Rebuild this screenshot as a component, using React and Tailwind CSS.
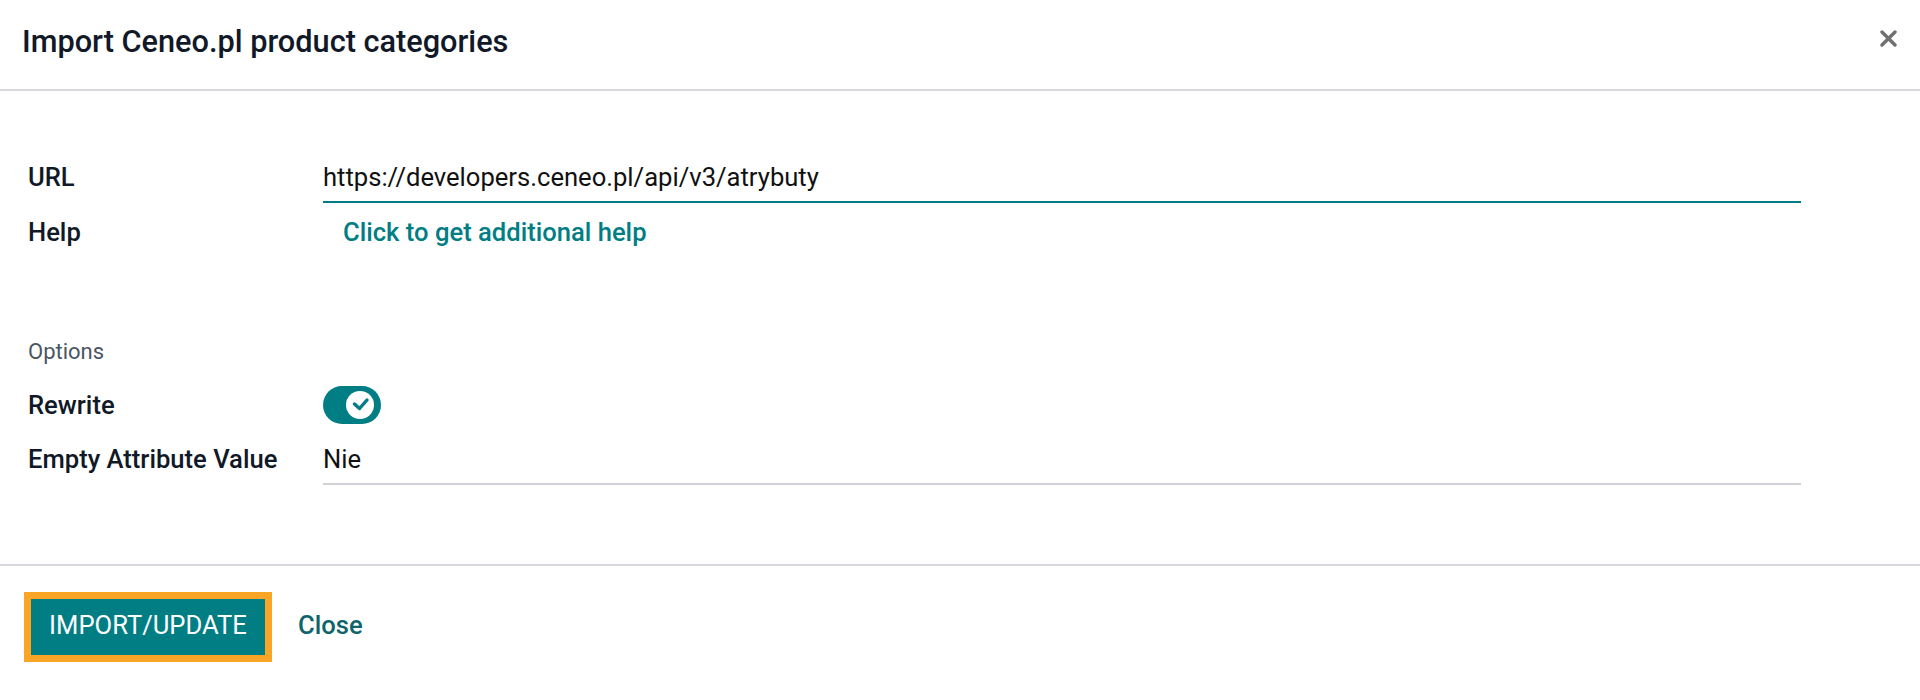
const fieldLabel = "w-[295px] shrink-0 pt-[6px] text-[25.6px] font-medium leading-[30px] text-[#111827]";

const Toggle = ({ checked = true }) => (
  <button
    type="button"
    aria-pressed={checked}
    className="flex h-[38px] w-[58px] items-center justify-end rounded-full bg-[#017e84] pr-[7px]"
  >
    <span className="flex h-[28px] w-[28px] items-center justify-center rounded-full bg-white">
      <svg width="28" height="28" viewBox="0 0 28 28" fill="none">
        <polyline points="8.5,13 13.5,17.5 21,9" stroke="#017e84" strokeWidth="3.4" strokeLinecap="round" strokeLinejoin="round" />
      </svg>
    </span>
  </button>
);

const App = () => {
  return (
    <div className="min-h-[700px] bg-white font-['Roboto',sans-serif] text-[#111827]">
      {/* header */}
      <div className="flex h-[91px] items-start justify-between border-b-2 border-[#d8d8de] pl-[22px] pr-[23px] pt-[24px]">
        <h4 className="text-[30.7px] font-medium leading-[36px] text-[#111827]">Import Ceneo.pl product categories</h4>
        <button type="button" aria-label="Close" className="mt-[6px]">
          <svg width="17" height="17" viewBox="0 0 17 17">
            <path d="M2 2 L15 15 M15 2 L2 15" stroke="#707070" strokeWidth="3.4" strokeLinecap="round" />
          </svg>
        </button>
      </div>

      {/* body */}
      <div className="px-[28px] pb-[79px] pt-[65px]">
        <div className="flex items-start">
          <div className={fieldLabel}>URL</div>
          <div className="w-[1478px] border-b-2 border-[#017e84] pb-[9px] pt-[6px] text-[25.6px] leading-[30px] text-[#111111]">
            https://developers.ceneo.pl/api/v3/atrybuty
          </div>
        </div>

        <div className="mt-[14px] flex items-start">
          <div className="w-[295px] shrink-0 text-[25.6px] font-medium leading-[30px]">Help</div>
          <button type="button" className="pl-[20px] text-[25.6px] font-medium leading-[30px] text-[#017e84]">
            Click to get additional help
          </button>
        </div>

        <div className="mt-[92px] text-[22px] leading-[26px] text-[#4b5563]">Options</div>

        <div className="mt-[21px] flex items-center">
          <div className="w-[295px] shrink-0 text-[25.6px] font-medium leading-[30px]">Rewrite</div>
          <Toggle />
        </div>

        <div className="mt-[14px] flex items-start">
          <div className={fieldLabel}>Empty Attribute Value</div>
          <div className="w-[1478px] border-b-2 border-[#d2d2d6] pb-[9px] pt-[6px] text-[25.6px] leading-[30px] text-[#111111]">
            Nie
          </div>
        </div>
      </div>

      {/* footer */}
      <div className="flex items-center border-t-2 border-[#d8d8de] pl-[31px] pt-[33px]">
        <button
          type="button"
          className="flex h-[56px] w-[234px] items-center justify-center bg-[#017e84] pb-[3px] text-[25.6px] text-white ring-[7px] ring-[#fba526]"
        >
          IMPORT/UPDATE
        </button>
        <button type="button" className="ml-[33px] pb-[3px] text-[25.6px] font-medium text-[#0f646b]">
          Close
        </button>
      </div>
    </div>
  );
};

export default App;
